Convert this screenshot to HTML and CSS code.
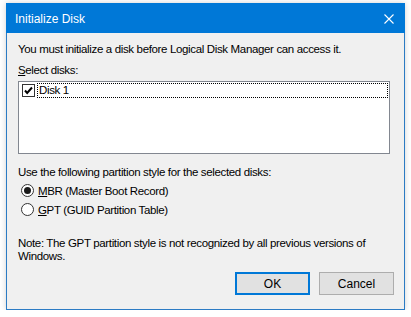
FILE: index.html
```html
<!DOCTYPE html>
<html lang="en">
<head>
    <meta charset="UTF-8">
    <title>Initialize Disk</title>
    <link rel="stylesheet" href="styles.css">
</head>
<body>
    <div class="dialog">
        <div class="titlebar">
            <span class="title">Initialize Disk</span>
            <svg class="close" width="10" height="10" viewBox="0 0 10 10">
                <path d="M0.5 0.5 L9.5 9.5 M9.5 0.5 L0.5 9.5" stroke="#fff" stroke-width="1.1" fill="none"/>
            </svg>
        </div>

        <div class="content">
            <p class="intro">You must initialize a disk before Logical Disk Manager can access it.</p>
            <p class="label"><u>S</u>elect disks:</p>

            <div class="disk-list">
                <div class="disk-item">
                    <svg class="check" width="13" height="13" viewBox="0 0 13 13">
                        <rect x="0.5" y="0.5" width="12" height="12" fill="#fff" stroke="#333"/>
                        <path d="M3 6.5 L5.2 9 L10 3.5" stroke="#000" stroke-width="2" fill="none"/>
                    </svg>
                    <span class="disk-name">Disk 1</span>
                </div>
            </div>

            <p class="label style-label">Use the following partition style for the selected disks:</p>

            <div class="radios">
                <div class="radio-row">
                    <span class="radio checked"></span>
                    <span><u>M</u>BR (Master Boot Record)</span>
                </div>
                <div class="radio-row">
                    <span class="radio"></span>
                    <span><u>G</u>PT (GUID Partition Table)</span>
                </div>
            </div>

            <p class="note">Note: The GPT partition style is not recognized by all previous versions of Windows.</p>

            <div class="buttons">
                <button class="btn btn-default">OK</button>
                <button class="btn">Cancel</button>
            </div>
        </div>
    </div>
</body>
</html>
```

FILE: styles.css
```css
body {
    margin: 0;
    background-color: #fff;
    font-family: "Liberation Sans", Arial, sans-serif;
    font-size: 11.5px;
    letter-spacing: -0.35px;
    color: #000;
}
.dialog {
    margin: 3px 0 0 6px;
    width: 399px;
    height: 307px;
    box-sizing: border-box;
    border: 1px solid #2b7bc4;
    background-color: #f0f0f0;
    box-shadow: 0 0 6px rgba(0, 0, 0, 0.18);
    display: flex;
    flex-direction: column;
}
.titlebar {
    height: 29px;
    background-color: #0078d7;
    display: flex;
    align-items: center;
    justify-content: space-between;
    padding: 1px 11px 0 9px;
    margin: -1px -1px 0 -1px;
}
.title {
    color: #fff;
    font-size: 12px;
    letter-spacing: 0;
}
.content {
    padding: 9px 14px 0 11px;
    display: flex;
    flex-direction: column;
    flex: 1;
}
p {
    margin: 0;
    line-height: 15px;
}
.intro {
    margin-bottom: 6px;
    white-space: nowrap;
}
.disk-list {
    margin-top: 3px;
    height: 73px;
    box-sizing: border-box;
    border: 1px solid #828790;
    background-color: #fff;
    padding: 1px 1px 0 3px;
}
.disk-item {
    display: flex;
    align-items: center;
    height: 15px;
}
.check {
    margin-right: 2px;
    flex: none;
}
.disk-name {
    flex: 1;
    outline: 1px dotted #000;
    outline-offset: -1px;
    padding-left: 2px;
    height: 15px;
    line-height: 15px;
}
.style-label {
    margin-top: 11px;
}
.radios {
    margin-top: 3px;
    padding-left: 3px;
    display: flex;
    flex-direction: column;
    gap: 4px;
}
.radio-row {
    display: flex;
    align-items: center;
    height: 15px;
}
.radio {
    width: 11px;
    height: 11px;
    border: 1px solid #333;
    border-radius: 50%;
    background-color: #fff;
    margin-right: 4px;
    position: relative;
    flex: none;
}
.radio.checked::after {
    content: "";
    position: absolute;
    left: 2px;
    top: 2px;
    width: 7px;
    height: 7px;
    border-radius: 50%;
    background-color: #1a1a1a;
}
.note {
    margin-top: 20px;
    line-height: 13px;
    padding-right: 10px;
}
.buttons {
    margin-top: auto;
    margin-bottom: 14px;
    display: flex;
    justify-content: flex-end;
    gap: 9px;
    margin-right: -4px;
}
.btn {
    width: 75px;
    height: 23px;
    font-family: inherit;
    font-size: 12px;
    letter-spacing: 0;
    background-color: #e1e1e1;
    border: 1px solid #adadad;
    padding: 0;
    color: #000;
}
.btn-default {
    border: 2px solid #0078d7;
}
```
